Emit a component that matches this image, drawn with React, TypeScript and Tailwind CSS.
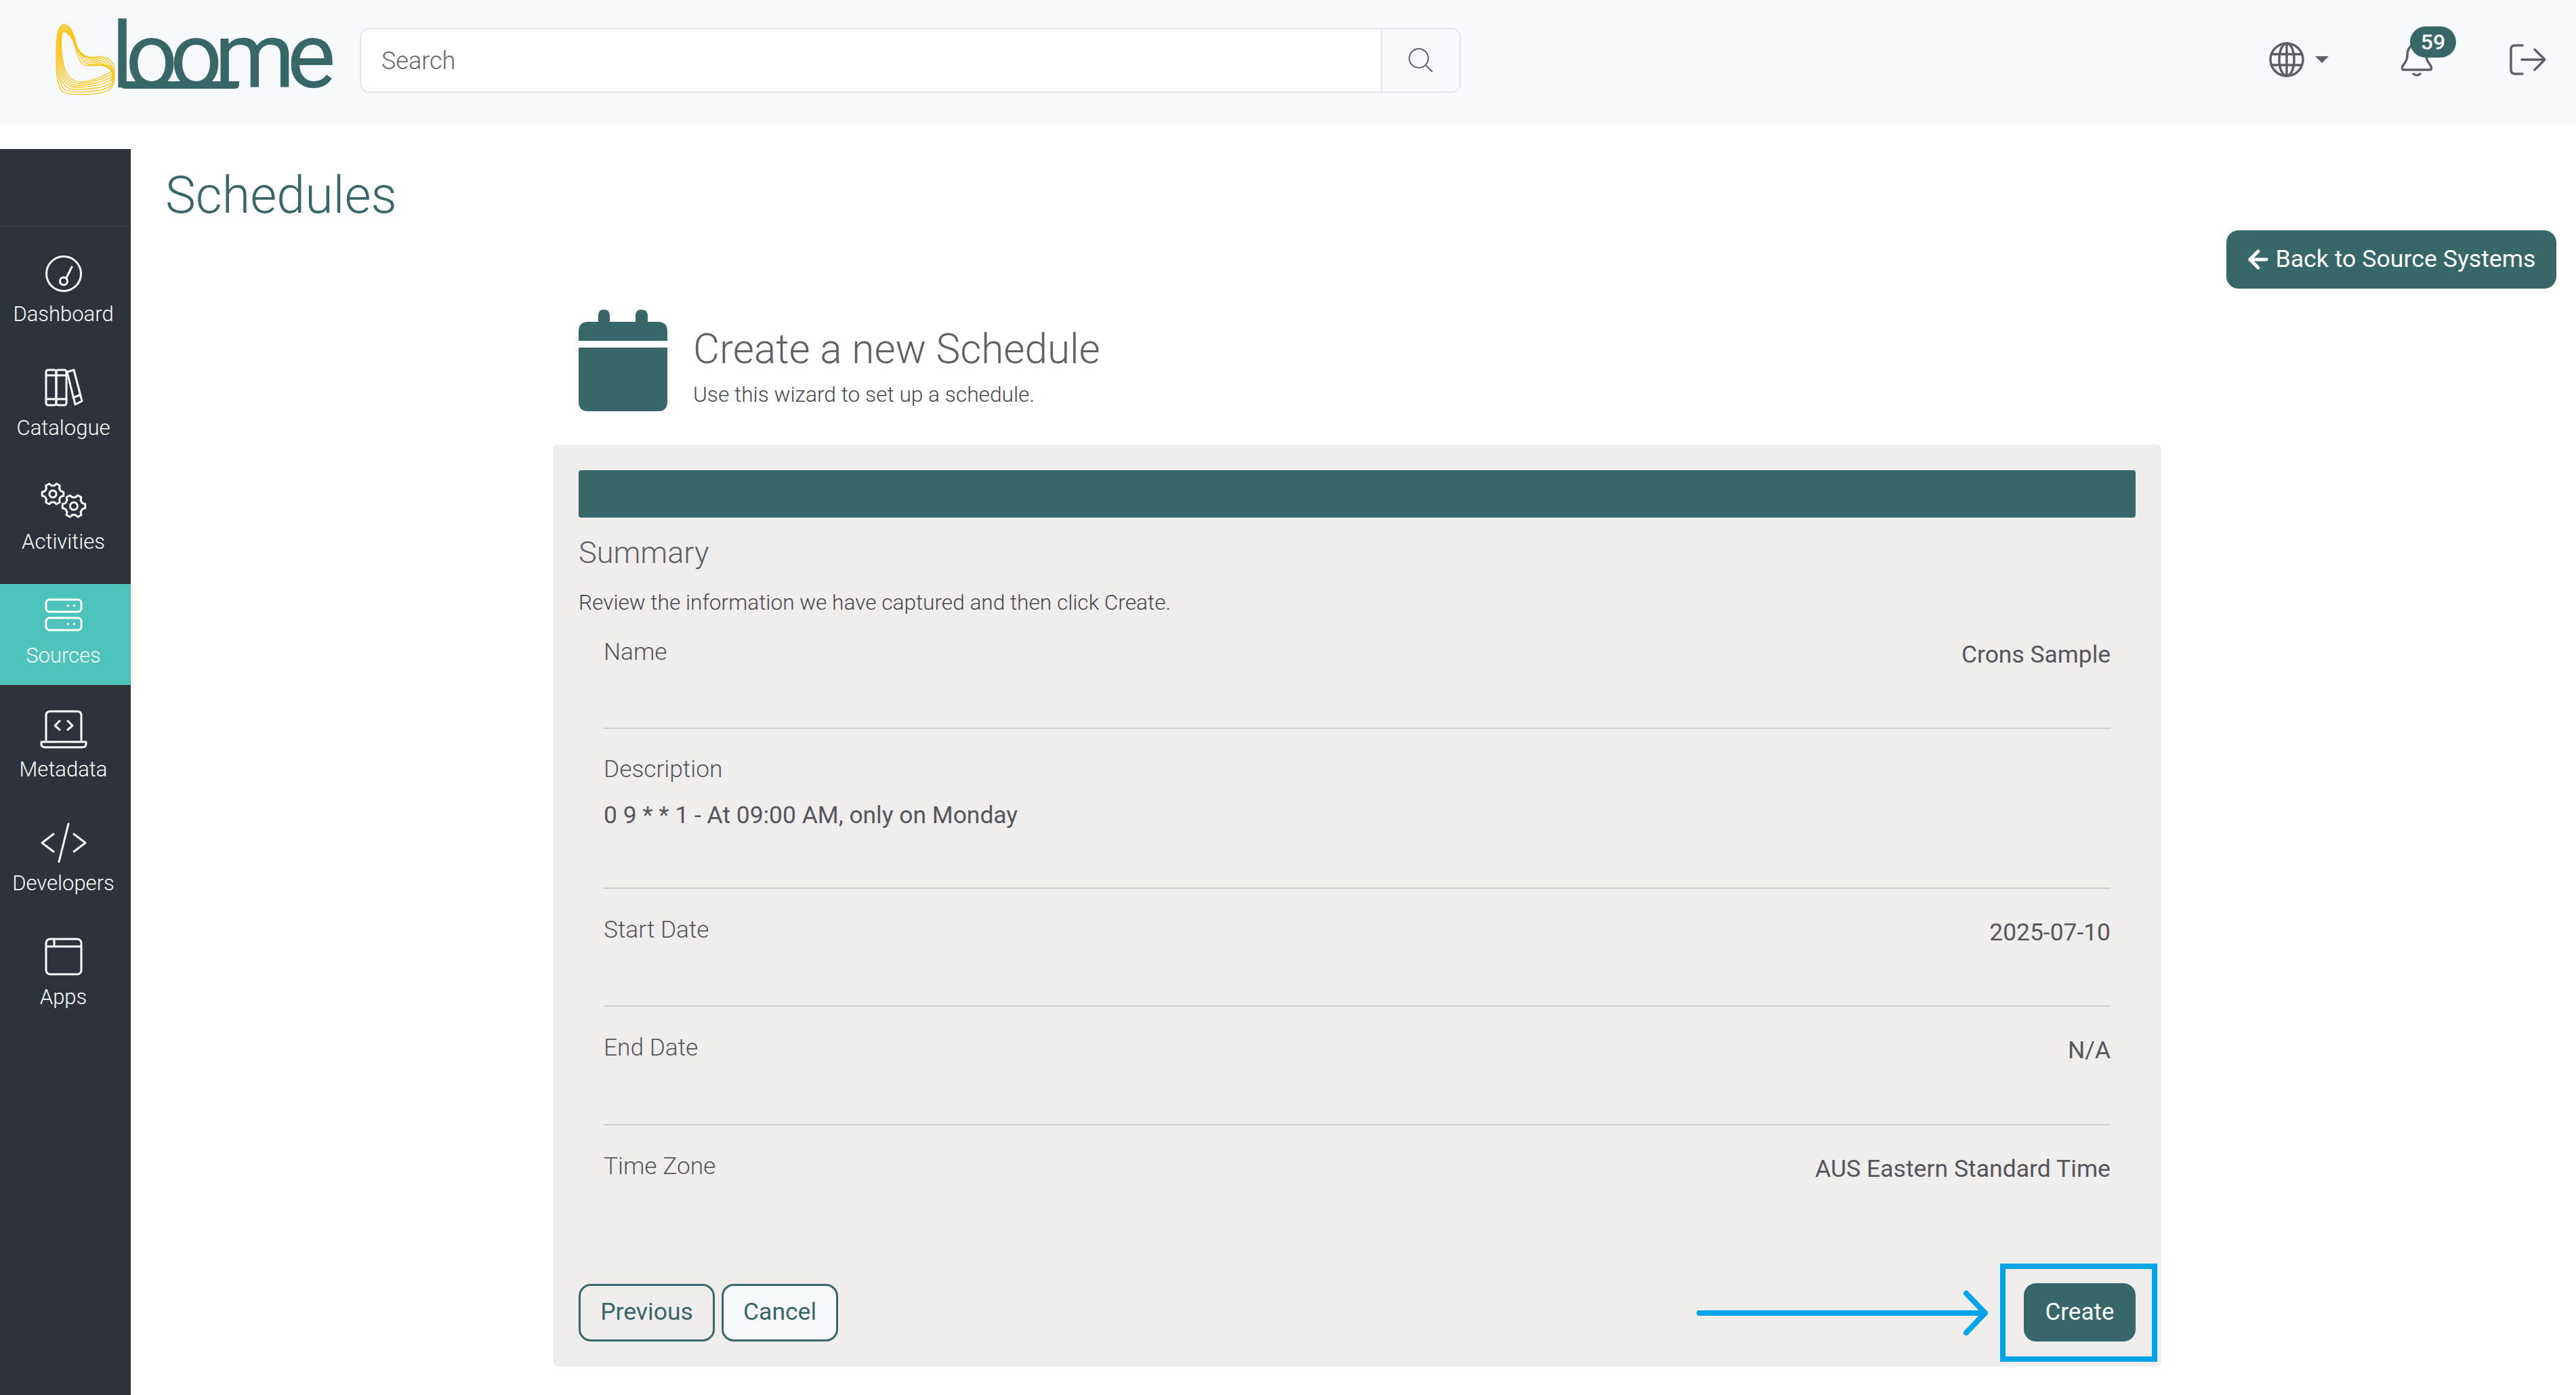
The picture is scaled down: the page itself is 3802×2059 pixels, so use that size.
import { ArrowLeft } from "lucide-react";
import type { ReactNode } from "react";

const teal = "#376769";

// each yellow ribbon line is a blend between the outer and the inner outline of the chair
const outer = [[94, 36], [85, 38], [83, 55], [83, 83], [83, 105], [84, 128], [92, 135], [100, 141], [140, 141], [156, 135], [170, 131], [169, 115], [169, 103], [169, 92], [160, 84], [147, 84], [138, 84], [126, 88], [118, 78], [112, 70], [112, 60], [108, 50], [104, 41], [100, 36]];
const inner = [[92, 48], [89, 57], [90, 70], [92, 85], [94, 100], [100, 122], [120, 121], [135, 120], [155, 112], [165, 105], [169, 102], [166, 97], [150, 96], [140, 96], [132, 99], [124, 96], [114, 90], [112, 70], [108, 60], [106, 56], [103, 52], [100, 50], [98, 47], [95, 46]];

function chairPath(t: number) {
  const p = outer.map((pt, i) => `${(pt[0] + (inner[i][0] - pt[0]) * t).toFixed(1)} ${(pt[1] + (inner[i][1] - pt[1]) * t).toFixed(1)}`);
  let d = `M${p[0]}`;
  for (let i = 1; i < p.length; i += 3) {
    d += `C${p[i]} ${p[i + 1]} ${p[(i + 2) % p.length]}`;
  }
  return d + "Z";
}

function Logo() {
  return (
    <div className="relative h-[183px] w-[500px] shrink-0">
      <svg className="absolute left-0 top-0" width="180" height="150" viewBox="0 0 180 150" fill="none" stroke="#ffc20e" strokeWidth="1.3">
        {[0, 0.16, 0.33, 0.5, 0.66, 0.83, 1].map((t) => (
          <path key={t} d={chairPath(t)} />
        ))}
      </svg>
      <span className="absolute left-[164px] top-[15px] text-[136px] leading-[136px] tracking-[-12px] text-[#376769]">loome</span>
      <span className="absolute left-[178px] top-[120px] h-[11px] w-[175px] rounded-b-[6px] bg-[#376769]" />
    </div>
  );
}

function SideIcon({ children }: { children: ReactNode }) {
  return (
    <svg width="70" height="60" viewBox="0 0 70 60" fill="none" stroke="currentColor" strokeWidth="3" strokeLinecap="round" strokeLinejoin="round">
      {children}
    </svg>
  );
}

// toothed gear outline, points alternate between the tip and the root radius
function gearPath(r: number, teeth: number) {
  const pts: string[] = [];
  const step = (Math.PI * 2) / teeth;
  for (let i = 0; i < teeth; i++) {
    const a = i * step;
    const list: [number, number][] = [
      [a - step * 0.32, r * 0.78],
      [a - step * 0.17, r],
      [a + step * 0.17, r],
      [a + step * 0.32, r * 0.78],
    ];
    list.forEach(([ang, rad]) => pts.push(`${(Math.cos(ang) * rad).toFixed(2)} ${(Math.sin(ang) * rad).toFixed(2)}`));
  }
  return `M${pts.join("L")}Z`;
}

function Gear({ x, y, r }: { x: number; y: number; r: number }) {
  return (
    <g transform={`translate(${x} ${y})`}>
      <path d={gearPath(r, 6)} />
      <circle r={r * 0.32} />
    </g>
  );
}

const nav = [
  {
    label: "Dashboard",
    icon: (
      <>
        <circle cx="35" cy="30" r="25.5" />
        <circle cx="35" cy="41" r="5.5" />
        <path d="M39 36L47 20" />
      </>
    ),
  },
  {
    label: "Catalogue",
    icon: (
      <>
        <rect x="9" y="4" width="15" height="52" rx="3" />
        <rect x="24" y="4" width="15" height="52" rx="3" />
        <path d="M9 12H39M9 47H39" />
        <path d="M40 7L50 4L62 50L52 55Z" />
        <path d="M49 45L59 41" />
      </>
    ),
  },
  {
    label: "Activities",
    icon: (
      <>
        <Gear x={19} y={19} r={16} />
        <Gear x={50} y={37} r={17} />
      </>
    ),
  },
  {
    label: "Sources",
    active: true,
    icon: (
      <>
        <rect x="9" y="7" width="52" height="18" rx="5" />
        <rect x="9" y="34" width="52" height="18" rx="5" />
        <path d="M41 16H42M50 16H51M41 43H42M50 43H51" />
      </>
    ),
  },
  {
    label: "Metadata",
    icon: (
      <>
        <path d="M9 46V10Q9 4 15 4H55Q61 4 61 10V46" />
        <path d="M2 49H68V52Q68 57 62 57H8Q2 57 2 52Z" />
        <path d="M29 18L22 25L29 31M41 18L48 25L41 31" />
      </>
    ),
  },
  {
    label: "Developers",
    icon: (
      <>
        <path d="M20 17L3 30L20 43M50 17L67 30L50 43" />
        <path d="M42 2L28 58" />
      </>
    ),
  },
  {
    label: "Apps",
    icon: (
      <>
        <rect x="9" y="4" width="52" height="52" rx="6" />
        <path d="M9 15H61M21 4V15" />
      </>
    ),
  },
];

function Sidebar() {
  return (
    <aside className="flex w-[193px] shrink-0 flex-col bg-[#2e323b] text-white">
      <div className="h-[115px] border-b-2 border-[#383c45]" />
      <div className="flex flex-col gap-[19px] pt-[23px]">
        {nav.map((item) => (
          <div key={item.label} className={`flex h-[149px] flex-col items-center pr-[6px] pt-[16px] ${item.active ? "bg-[#4ec3bb]" : ""}`}>
            <SideIcon>{item.icon}</SideIcon>
            <span className="mt-[10px] text-[31px] font-light leading-[40px]">{item.label}</span>
          </div>
        ))}
      </div>
    </aside>
  );
}

function Row({ label, value, className, stacked }: { label: string; value: string; className: string; stacked?: boolean }) {
  return (
    <div className={`border-b-2 border-[#cdccce] ${className} ${stacked ? "" : "flex items-start justify-between"}`}>
      <div className="text-[35.3px] font-light leading-[44px] text-[#55555c]">{label}</div>
      <div className={`text-[35.4px] leading-[44px] text-[#55555c] ${stacked ? "mt-[24px]" : "mt-[4px]"}`}>{value}</div>
    </div>
  );
}

export default function App() {
  return (
    <div className="flex h-[2059px] w-[3802px] flex-col overflow-hidden bg-white font-['Roboto',sans-serif]">
      <header className="flex h-[183px] shrink-0 items-start bg-[#f8f9fb]">
        <Logo />
        <div className="ml-[31px] mt-[41px] flex h-[96px] w-[1625px] overflow-hidden rounded-[14px] border-2 border-[#e1e4ea] bg-white">
          <div className="flex flex-1 items-center pl-[30px] pt-[2px] text-[36px] font-light text-[#66666d]">Search</div>
          <div className="flex w-[116px] items-center justify-center border-l-2 border-[#e1e4ea] bg-[#f8f9fb]">
            <svg width="36" height="36" viewBox="0 0 36 36" fill="none" stroke="#5e5e66" strokeWidth="2">
              <circle cx="15" cy="15" r="14" />
              <path d="M25 25L35 35" />
            </svg>
          </div>
        </div>
        <div className="ml-auto mt-[62px] flex items-center pr-[45px] text-[#5e5e66]">
          <svg width="52" height="52" viewBox="0 0 52 52" fill="none" stroke="currentColor" strokeWidth="3.5">
            <circle cx="26" cy="26" r="24" />
            <ellipse cx="26" cy="26" rx="11" ry="24" />
            <path d="M3 18H49M3 34H49M26 2V50" />
          </svg>
          <span className="ml-[16px] h-0 w-0 border-x-[10px] border-t-[10px] border-x-transparent border-t-[#5e5e66]" />
          <div className="relative ml-[107px] h-[52px] w-[46px]">
            <svg width="46" height="52" viewBox="0 0 46 52" fill="none" stroke="currentColor" strokeWidth="3.5" strokeLinecap="round" strokeLinejoin="round">
              <path d="M9 20C9 8 16 3 23 3C30 3 37 8 37 20C37 30 44 33 45 38Q45 41 42 41H4Q1 41 1 38C2 33 9 30 9 20Z" />
              <path d="M18 47Q23 51 28 47" />
            </svg>
            <span className="absolute left-[13px] top-[-23px] flex h-[46px] w-[68px] items-center justify-center rounded-full bg-[#376769] text-[32px] font-medium leading-none text-white">59</span>
          </div>
          <svg className="ml-[114px]" width="53" height="46" viewBox="0 0 53 46" fill="none" stroke="currentColor" strokeWidth="3.5" strokeLinecap="round" strokeLinejoin="round">
            <path d="M19 2H8Q2 2 2 8V38Q2 44 8 44H19" />
            <path d="M18 23H51M37 8L52 23L37 38" />
          </svg>
        </div>
      </header>

      <div className="mt-[37px] flex min-h-0 flex-1">
        <Sidebar />
        <main className="relative min-w-0 flex-1">
          <h1 className="pl-[51px] pt-[18px] text-[75.5px] font-light leading-[100px] text-[#376769]">Schedules</h1>
          <div className="flex justify-end pr-[29px]">
            <button className="mt-[2px] flex h-[86px] w-[487px] items-center justify-center gap-[4px] rounded-[18px] pr-[4px] text-[35.7px] text-white" style={{ backgroundColor: teal }}>
              <ArrowLeft size={42} strokeWidth={2.8} />
              Back to Source Systems
            </button>
          </div>

          <div className="ml-[623px] mt-[36px] w-[2374px]">
            <div className="flex items-start pl-[38px]">
              <svg className="mt-[-5px]" width="131" height="150" viewBox="0 0 131 150" fill={teal}>
                <path d="M29 18V9Q29 0 37 0Q46 0 46 9V18H84V9Q84 0 92 0Q102 0 102 9V18H117Q131 18 131 32V46H0V32Q0 18 14 18Z" />
                <path d="M0 56H131V136Q131 150 117 150H14Q0 150 0 136Z" />
              </svg>
              <div className="ml-[38px] pt-[18px]">
                <div className="text-[60.2px] font-light leading-[72px] text-[#5f5f66]">Create a new Schedule</div>
                <div className="mt-[9px] text-[31.7px] font-light leading-[44px] text-[#47474d]">Use this wizard to set up a schedule.</div>
              </div>
            </div>

            <section className="relative mt-[49px] h-[1361px] rounded-[8px] bg-[#efeeed] px-[38px] pt-[38px]">
              <div className="h-[70px] rounded-[4px]" style={{ backgroundColor: teal }} />
              <div className="mt-[24px] text-[45px] font-light leading-[56px] text-[#5f5f66]">Summary</div>
              <div className="mt-[24px] text-[31.6px] font-light leading-[44px] text-[#47474d]">Review the information we have captured and then click Create.</div>
              <div className="mt-[3px] px-[37px]">
                <Row label="Name" value="Crons Sample" className="h-[161px] pt-[25px]" />
                <Row label="Description" value="0 9 * * 1 - At 09:00 AM, only on Monday" className="h-[236px] pt-[37px]" stacked />
                <Row label="Start Date" value="2025-07-10" className="h-[174px] pt-[38px]" />
                <Row label="End Date" value="N/A" className="h-[175px] pt-[38px]" />
                <div className="flex items-start justify-between pt-[38px]">
                  <div className="text-[35.3px] font-light leading-[44px] text-[#55555c]">Time Zone</div>
                  <div className="mt-[4px] text-[35.6px] leading-[44px] text-[#55555c]">AUS Eastern Standard Time</div>
                </div>
              </div>

              <div className="absolute inset-x-[38px] top-[1238px] flex items-center gap-[10px]">
                <button className="h-[85px] w-[201px] rounded-[18px] border-[3px] border-[#376769] text-[35.5px] text-[#376769]">Previous</button>
                <button className="h-[85px] w-[172px] rounded-[18px] border-[3px] border-[#376769] bg-[#f8f9fb] text-[35.5px] text-[#376769]">Cancel</button>
                <button className="ml-auto h-[86px] w-[165px] rounded-[18px] text-[35px] text-white" style={{ backgroundColor: teal }}>Create</button>
              </div>

              {/* annotation drawn over the screenshot */}
              <div className="absolute left-[2136px] top-[1209px] h-[145px] w-[232px] border-[8px] border-[#00a4e8]" />
              <svg className="absolute left-[1680px] top-[1246px]" width="445" height="70" viewBox="0 0 445 70" fill="none" stroke="#00a4e8" strokeWidth="8" strokeLinecap="round" strokeLinejoin="round">
                <path d="M12 36H434M406 7L434 36L406 65" />
              </svg>
            </section>
          </div>
        </main>
      </div>
    </div>
  );
}
